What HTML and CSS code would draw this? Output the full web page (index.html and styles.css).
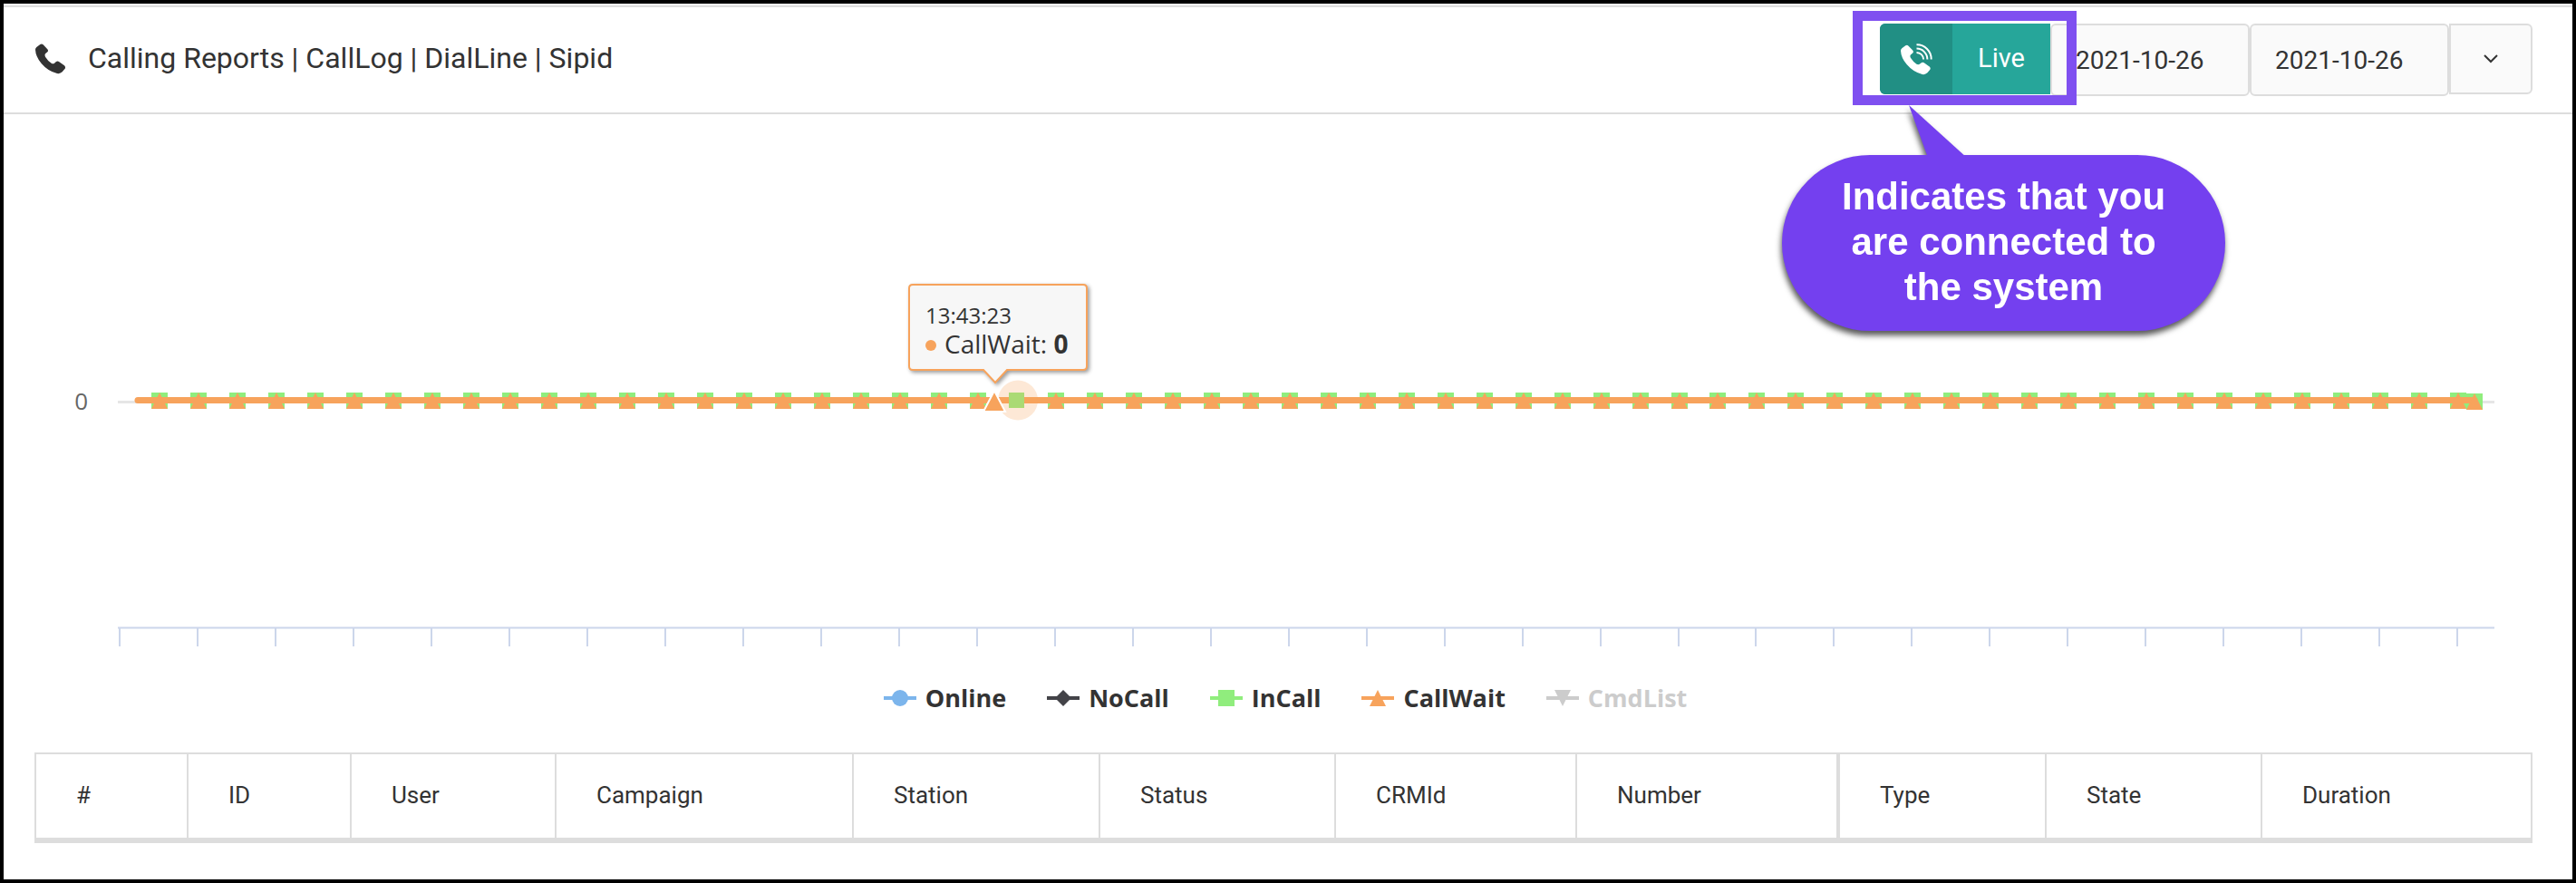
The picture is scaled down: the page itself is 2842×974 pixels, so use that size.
FILE: index.html
```html
<!DOCTYPE html>
<html lang="en">
<head>
<meta charset="utf-8">
<title>Calling Reports</title>
<link rel="stylesheet" href="styles.css">
</head>
<body>
<svg class="sprite" aria-hidden="true">
  <symbol id="handset" viewBox="0 0 102 102">
    <path d="M16 3Q21 -1 26 4L40 19Q44 24 40 28L33 34Q30 38 33 44Q41 57 53 65Q59 68 63 65L69 60Q74 57 79 61L96 73Q101 78 98 83L89 94Q82 101 72 99Q42 92 20 66Q1 43 0 20Q0 15 4 12Z"/>
  </symbol>
</svg>

<header class="topbar">
  <h1 class="title">
    <svg class="title-icon" aria-hidden="true"><use href="#handset"/></svg>
    <span>Calling Reports | CallLog | DialLine | Sipid</span>
  </h1>
  <div class="controls">
    <div class="live-wrap">
      <button class="live" type="button">
        <span class="live-icon">
          <svg viewBox="0 0 106 106" aria-hidden="true">
            <use href="#handset" x="0" y="4" width="102" height="102"/>
            <path class="wave" d="M53 4A48 48 0 0 1 102 53M53 17A36 36 0 0 1 89 53M53 30A23 23 0 0 1 76 53"/>
          </svg>
        </span>
        <span class="live-label">Live</span>
      </button>
      <div class="highlight"></div>
      <div class="callout">
        <svg class="callout-tail" viewBox="0 0 64 60" aria-hidden="true"><path d="M0 0L21 58H64Z"/></svg>
        <p class="callout-text">Indicates that you<br>are connected to<br>the system</p>
      </div>
    </div>
    <input class="date" type="text" value="2021-10-26" aria-label="From date">
    <input class="date" type="text" value="2021-10-26" aria-label="To date">
    <button class="more" type="button" aria-label="More options">
      <svg viewBox="0 0 18 12" aria-hidden="true"><path d="M2 2L9 9L16 2"/></svg>
    </button>
  </div>
</header>

<main>
  <svg class="chart" viewBox="4 126 2834 604" role="img" aria-label="Calls over time">
    <path class="grid" d="M130 443.5H2752"/>
    <text class="axis-label" x="97" y="452" text-anchor="end">0</text>
    <path class="axis" d="M130 692.5H2752"/>
    <path class="axis" id="ticks"/>
    <path class="incall" id="squares"/>
    <path class="callwait-line" d="M152 441.5H2730"/>
    <path class="incall" d="M1113 433h17v17h-17z"/>
    <path class="callwait" id="triangles"/>
    <circle class="halo" cx="1123" cy="441.5" r="22"/>
    <path class="point-hover" d="M1097 431L1109 454H1085Z"/>
    <g class="tooltip">
      <path d="M1007 314H1195Q1199 314 1199 318V404Q1199 408 1195 408H1111L1098 422L1085 408H1007Q1003 408 1003 404V318Q1003 314 1007 314Z"/>
      <text class="tip-time" x="1021" y="357">13:43:23</text>
      <circle cx="1027" cy="381" r="6"/>
      <text class="tip-value" x="1042" y="390">CallWait: <tspan class="strong">0</tspan></text>
    </g>
  </svg>

  <div class="legend">
    <button type="button"><svg class="online" viewBox="0 0 36 20"><path class="dash" d="M0 10H36"/><circle cx="18" cy="10" r="9"/></svg>Online</button>
    <button type="button"><svg class="nocall" viewBox="0 0 36 20"><path class="dash" d="M0 10H36"/><path d="M18 1L27 10L18 19L9 10Z"/></svg>NoCall</button>
    <button type="button"><svg class="incall" viewBox="0 0 36 20"><path class="dash" d="M0 10H36"/><path d="M9 1H27V19H9Z"/></svg>InCall</button>
    <button type="button"><svg class="callwait" viewBox="0 0 36 20"><path class="dash" d="M0 10H36"/><path d="M18 1L27 19H9Z"/></svg>CallWait</button>
    <button type="button" class="off"><svg class="cmdlist" viewBox="0 0 36 20"><path class="dash" d="M0 10H36"/><path d="M9 1H27L18 19Z"/></svg>CmdList</button>
  </div>

  <table class="calls">
    <colgroup>
      <col class="c-num"><col class="c-id"><col class="c-user"><col class="c-campaign"><col class="c-station"><col class="c-status"><col class="c-crm"><col class="c-number"><col class="c-type"><col class="c-state"><col class="c-duration">
    </colgroup>
    <thead>
      <tr><th>#</th><th>ID</th><th>User</th><th>Campaign</th><th>Station</th><th>Status</th><th>CRMId</th><th>Number</th><th class="group">Type</th><th>State</th><th>Duration</th></tr>
    </thead>
  </table>
</main>
<script src="chart.js"></script>
</body>
</html>
```
FILE: styles.css
```css
* { box-sizing: border-box; }
body {
  margin: 0;
  min-height: 100vh;
  border: 4px solid #000;
  background: #fff;
  color: #333;
  font-family: Roboto, "Liberation Sans", sans-serif;
  font-size: 28px;
}
button, input { font: inherit; color: inherit; margin: 0; }
.sprite { position: absolute; width: 0; height: 0; }

.topbar {
  display: flex;
  justify-content: space-between;
  padding: 18px 44px 18px 35px;
  border-top: 2px solid #ddd;
  border-bottom: 2px solid #ddd;
  margin-top: 2px;
  box-shadow: 0 -2px #f5f5f5;
}
.title {
  display: flex;
  align-items: center;
  gap: 24px;
  height: 78px;
  margin: 0;
  font-size: 32px;
  line-height: 40px;
  font-weight: 400;
}
.title span { padding-bottom: 2px; }
.title-icon { width: 34px; height: 34px; fill: #333; }
.controls { display: flex; align-items: flex-start; }

.live-wrap { position: relative; }
.live {
  display: flex;
  align-items: stretch;
  height: 78px;
  padding: 0;
  border: 0;
  border-radius: 6px 0 0 6px;
  overflow: hidden;
  background: #26a69a;
  color: #fff;
}
.live-icon {
  display: grid;
  place-items: center;
  width: 80px;
  background: #218f84;
}
.live-icon svg { width: 35px; height: 35px; fill: #fff; }
.live-icon .wave { fill: none; stroke: #fff; stroke-width: 6; }
.live-label { width: 108px; font-size: 29px; line-height: 77px; text-align: center; }

.highlight {
  position: absolute;
  z-index: 1;
  inset: -14px -29px -12px -30px;
  border: 11px solid #7f50f0;
}
.callout {
  position: absolute;
  z-index: 2;
  top: 145px;
  left: -108px;
  width: 489px;
  padding: 21px 0 23px;
  border-radius: 97px;
  background: #7440ef;
  filter: drop-shadow(-1px 5px 3px rgba(0, 0, 0, 0.65));
}
.callout-tail {
  position: absolute;
  top: -55px;
  left: 140px;
  width: 64px;
  height: 60px;
  fill: #7440ef;
}
.callout-text {
  margin: 0;
  color: #fff;
  font: bold 42px/50px "Liberation Sans", Arial, sans-serif;
  text-align: center;
}

.date {
  width: 220px;
  height: 80px;
  padding: 0 26px;
  border: 2px solid #ddd;
  border-radius: 6px;
  background: #fafafa;
}
.more {
  display: grid;
  place-items: center;
  width: 92px;
  height: 78px;
  padding: 0;
  border: 2px solid #ddd;
  border-radius: 0 6px 6px 0;
  background: #fafafa;
}
.more svg { width: 18px; height: 12px; fill: none; stroke: #333; stroke-width: 2; }

.chart {
  display: block;
  width: 100%;
  height: auto;
  font-family: "Open Sans", "Noto Sans", sans-serif;
}
.grid { stroke: #e6e6e6; stroke-width: 3; }
.axis { fill: none; stroke: #ccd6eb; stroke-width: 2; }
.axis-label { fill: #666; font-size: 26px; }
.online { fill: #7cb5ec; stroke: #7cb5ec; }
.nocall { fill: #434348; stroke: #434348; }
.incall { fill: #90ed7d; stroke: #90ed7d; }
.callwait { fill: #f7a35c; stroke: #f7a35c; }
.cmdlist { fill: #ccc; stroke: #ccc; }
.chart .incall, .chart .callwait, .legend svg { stroke-width: 0; }
.callwait-line { stroke: #f7a35c; stroke-width: 7; stroke-linecap: round; }
.halo { fill: #f7a35c; fill-opacity: 0.25; }
.point-hover { fill: #f7a35c; stroke: #fff; stroke-width: 2; }
.tooltip path {
  fill: #f7f7f7;
  stroke: #f7a35c;
  stroke-width: 2;
  filter: drop-shadow(2px 2px 2px rgba(0, 0, 0, 0.4));
}
.tooltip circle { fill: #f7a35c; }
.tooltip text { fill: #333; }
.tip-time { font-size: 24px; }
.tip-value { font-size: 28px; }
.strong { font-weight: 700; }

.legend {
  display: flex;
  justify-content: center;
  gap: 45px;
  padding: 22px 6px 0 0;
}
.legend button {
  display: flex;
  align-items: center;
  gap: 10px;
  padding: 0;
  border: 0;
  background: none;
  font: bold 27px/36px "Open Sans", "Noto Sans", sans-serif;
}
.legend .off { color: #ccc; }
.legend svg { width: 36px; height: 20px; }
.legend .dash { stroke-width: 4; }

.calls {
  width: calc(100% - 78px);
  margin: 42px 44px 0 34px;
  border-collapse: separate;
  border-spacing: 0;
  border: solid #ddd;
  border-width: 2px 2px 6px;
  table-layout: fixed;
}
.calls th {
  height: 92px;
  padding: 0 0 2px 44px;
  font-size: 26px;
  font-weight: 400;
  text-align: left;
}
.calls th + th { border-left: 2px solid #ddd; }
.calls th.group { border-left-width: 4px; }
.c-num { width: 166px; }
.c-id { width: 180px; }
.c-user { width: 226px; }
.c-campaign { width: 328px; }
.c-station { width: 272px; }
.c-status { width: 260px; }
.c-crm { width: 266px; }
.c-number { width: 288px; }
.c-type { width: 230px; }
.c-state { width: 238px; }
.c-duration { width: 298px; }
```
FILE: chart.js
```js
const FIRST = 176.3;
const STEP = 42.98;
const COUNT = 60;
const HOVERED = 22;

const squareAt = (x, y) => `M${x - 9} ${y}h18v18h-18z`;
const triangleAt = (x, y) => `M${x} ${y}l9 18h-18z`;

let squares = squareAt(2730, 434);
let triangles = triangleAt(2730, 434);
let ticks = 'M132 692V713';
for (let i = 0; i < COUNT; i++) {
  const x = Math.round(FIRST + i * STEP);
  if (i !== HOVERED) {
    squares += squareAt(x, 433);
    triangles += triangleAt(x, 433);
  }
  if (i % 2 === 1) ticks += `M${x - 1} 692V713`;
}
document.getElementById('squares').setAttribute('d', squares);
document.getElementById('triangles').setAttribute('d', triangles);
document.getElementById('ticks').setAttribute('d', ticks);
```
